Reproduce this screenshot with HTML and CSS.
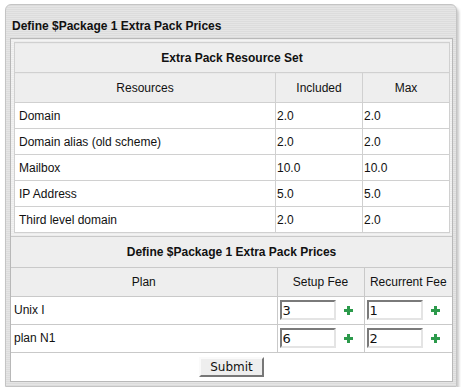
FILE: index.html
```html
<!DOCTYPE html>
<html lang="en">
<head>
    <meta charset="UTF-8">
    <title>Define $Package 1 Extra Pack Prices</title>
    <link rel="stylesheet" href="styles.css">
</head>
<body>
    <div class="form-box">
        <div class="form-box-title">Define $Package 1 Extra Pack Prices</div>
        <div class="form-box-body">
            <table class="prices">
                <colgroup>
                    <col class="col-name">
                    <col class="col-fee">
                    <col>
                </colgroup>
                <tr>
                    <td colspan="3" class="nested-cell">
                        <table class="resources">
                            <colgroup>
                                <col class="col-res">
                                <col class="col-inc">
                                <col>
                            </colgroup>
                            <tr><th colspan="3" class="section">Extra Pack Resource Set</th></tr>
                            <tr class="cols"><th>Resources</th><th>Included</th><th>Max</th></tr>
                            <tr><td>Domain</td><td>2.0</td><td>2.0</td></tr>
                            <tr><td>Domain alias (old scheme)</td><td>2.0</td><td>2.0</td></tr>
                            <tr><td>Mailbox</td><td>10.0</td><td>10.0</td></tr>
                            <tr><td>IP Address</td><td>5.0</td><td>5.0</td></tr>
                            <tr><td>Third level domain</td><td>2.0</td><td>2.0</td></tr>
                        </table>
                    </td>
                </tr>
                <tr><th colspan="3" class="section section-2">Define $Package 1 Extra Pack Prices</th></tr>
                <tr class="cols cols-2"><th>Plan</th><th>Setup Fee</th><th>Recurrent Fee</th></tr>
                <tr class="plan">
                    <td>Unix I</td>
                    <td><div class="field"><input type="text" value="3"><svg class="plus" viewBox="0 0 9 9"><path d="M3 0h3v3h3v3H6v3H3V6H0V3h3z"/></svg></div></td>
                    <td><div class="field"><input type="text" value="1"><svg class="plus" viewBox="0 0 9 9"><path d="M3 0h3v3h3v3H6v3H3V6H0V3h3z"/></svg></div></td>
                </tr>
                <tr class="plan">
                    <td>plan N1</td>
                    <td><div class="field"><input type="text" value="6"><svg class="plus" viewBox="0 0 9 9"><path d="M3 0h3v3h3v3H6v3H3V6H0V3h3z"/></svg></div></td>
                    <td><div class="field"><input type="text" value="2"><svg class="plus" viewBox="0 0 9 9"><path d="M3 0h3v3h3v3H6v3H3V6H0V3h3z"/></svg></div></td>
                </tr>
                <tr>
                    <td colspan="3" class="buttons"><button type="submit">Submit</button></td>
                </tr>
            </table>
        </div>
    </div>
</body>
</html>
```

FILE: styles.css
```css
body {
    margin: 0;
    background: #fff;
    font-family: 'Liberation Sans', Arial, sans-serif;
    font-size: 12px;
    color: #111;
}

.form-box {
    box-sizing: border-box;
    width: 452px;
    margin: 4px 0 0 5px;
    padding: 0 3px 4px 4px;
    border: 1px solid #c4c4c4;
    border-radius: 6px 6px 0 0;
    background: repeating-linear-gradient(to bottom, #dcdcdc 0, #dcdcdc 1px, #e5e5e5 1px, #e5e5e5 2px);
    box-shadow: 2px 3px 3px rgba(0, 0, 0, 0.22);
}

.form-box-title {
    padding: 14px 2px 5px;
    font-weight: bold;
    line-height: 14px;
}

.form-box-body {
    border: 1px solid #b8b8b8;
    background: repeating-linear-gradient(to bottom, #ececec 0, #ececec 1px, #f3f3f3 1px, #f3f3f3 2px);
}

table {
    border-collapse: collapse;
    table-layout: fixed;
}

.prices {
    width: 100%;
    border-style: hidden;
}

.col-name {
    width: 266px;
}

.col-fee {
    width: 87px;
}

.prices > tbody > tr > td,
.prices > tbody > tr > th {
    border: 1px solid #c9c9c9;
}

.nested-cell {
    padding: 3px 2px 3px 3px;
}

.resources {
    width: 100%;
    border: 1px solid #bdbdbd;
}

.col-res {
    width: 261px;
}

.col-inc {
    width: 87px;
}

.resources td,
.resources th {
    border: 1px solid #d0d0d0;
}

th {
    font-weight: normal;
    line-height: 14px;
    text-align: center;
    background: repeating-linear-gradient(to bottom, #e9e9e9 0, #e9e9e9 1px, #f2f2f2 1px, #f2f2f2 2px);
}

th.section {
    font-weight: bold;
    padding: 8px 4px 7px;
}

th.section-2 {
    padding: 8px 4px 8px;
}

.cols th {
    padding: 8px 2px 7px;
}

.cols-2 th {
    padding: 7px 2px 7px;
}

td {
    background: #fff;
    line-height: 14px;
    padding: 6px 2px 5px 1px;
    white-space: nowrap;
}

.resources td:first-child {
    padding-left: 4px;
}

.prices > tbody > tr > td.nested-cell {
    background: transparent;
}

.plan td {
    padding: 3px 2px 4px 2px;
}

.plan td:first-child {
    padding-left: 3px;
}

.field {
    display: flex;
    align-items: center;
    gap: 8px;
}

.field input {
    box-sizing: border-box;
    width: 56px;
    height: 20px;
    margin: 0;
    padding: 0 1px;
    border: 2px solid;
    border-color: #7a7a7a #e4e4e4 #e4e4e4 #7a7a7a;
    background: #fff;
    font-family: 'DejaVu Sans', sans-serif;
    font-size: 13px;
    color: #111;
}

.plus {
    width: 9px;
    height: 9px;
    fill: #2c9a4b;
}

td.buttons {
    text-align: center;
    padding: 4px 0 4px;
}

button {
    height: 20px;
    padding: 0 9px;
    border: 2px solid;
    border-color: #fafafa #777 #777 #fafafa;
    background: #eeeeee;
    font-family: 'DejaVu Sans', sans-serif;
    font-size: 12px;
    color: #111;
    line-height: 14px;
}
```
